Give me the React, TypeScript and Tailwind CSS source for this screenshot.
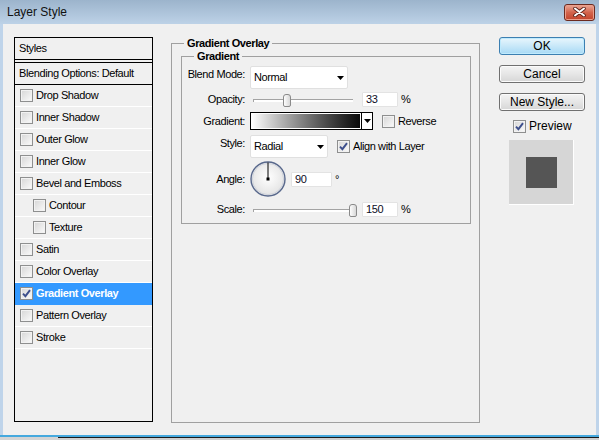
import clsx from "clsx";

const styleItems = [
  { label: "Drop Shadow" },
  { label: "Inner Shadow" },
  { label: "Outer Glow" },
  { label: "Inner Glow" },
  { label: "Bevel and Emboss" },
  { label: "Contour", sub: true },
  { label: "Texture", sub: true },
  { label: "Satin" },
  { label: "Color Overlay" },
  { label: "Gradient Overlay", on: true },
  { label: "Pattern Overlay" },
  { label: "Stroke" },
];

function Check({ on = false, className }: { on?: boolean; className?: string }) {
  return (
    <span
      className={clsx(
        "flex h-[13px] w-[13px] shrink-0 items-center justify-center border border-[#8e8f8f] bg-linear-to-br from-[#d6d6d6] to-[#fbfbfb] shadow-[inset_0_0_0_1px_#f2f2f2]",
        className
      )}
    >
      {on && (
        <svg width="9" height="9" viewBox="0 0 9 9">
          <path d="M1 4.6 L3.4 7.2 L8 1.2" fill="none" stroke="#3d4f8c" strokeWidth="1.9" />
        </svg>
      )}
    </span>
  );
}

function Arrow() {
  return (
    <svg width="7" height="4" viewBox="0 0 7 4">
      <path d="M0 0 H7 L3.5 4 Z" fill="#000" />
    </svg>
  );
}

function Select({ value, width }: { value: string; width: string }) {
  return (
    <div
      className={clsx(
        "ml-[5px] flex h-[23px] items-center justify-between rounded-[2px] border border-[#e0e0e0] bg-white pl-[3px] pr-[3px]",
        width
      )}
    >
      <span>{value}</span>
      <Arrow />
    </div>
  );
}

function Field({ value, width, className }: { value: string; width: string; className?: string }) {
  return (
    <div
      className={clsx(
        "flex h-[15px] items-center rounded-[1px] border border-[#e3e3e3] bg-white pl-[3px] text-[#0c0c1e]",
        width,
        className
      )}
    >
      {value}
    </div>
  );
}

function Slider({ thumb }: { thumb: string }) {
  return (
    <div className="relative ml-[8px] h-[15px] w-[100px]">
      <div className="absolute left-0 right-0 top-[7px] h-[3px] border-l border-t border-[#a3a3a3] bg-white" />
      <div
        className={clsx(
          "absolute top-[2px] h-[13px] w-[8px] rounded-t-[3px] rounded-b-[2px] border border-[#8a8a8a] bg-linear-to-r from-[#fdfdfd] to-[#d8d8d8]",
          thumb
        )}
      />
    </div>
  );
}

function Dial() {
  return (
    <svg width="36" height="36" viewBox="0 0 36 36" className="ml-[5px]">
      <defs>
        <radialGradient id="dialFill" cx="50%" cy="45%" r="55%">
          <stop offset="0%" stopColor="#ffffff" />
          <stop offset="100%" stopColor="#e2e2e2" />
        </radialGradient>
      </defs>
      <circle cx="18" cy="18" r="17" fill="url(#dialFill)" stroke="#58688c" strokeWidth="1.4" />
      <circle cx="18" cy="18" r="15.6" fill="none" stroke="#c9ced8" strokeWidth="0.8" />
      <line x1="18" y1="18" x2="18" y2="1.5" stroke="#000" strokeWidth="1" />
      <rect x="16.5" y="16.5" width="3" height="3" fill="#000" />
    </svg>
  );
}

function Btn({ label, primary = false, className }: { label: string; primary?: boolean; className?: string }) {
  return (
    <button
      className={clsx(
        "flex h-[18px] w-[86px] items-center justify-center rounded-[3px] border text-[12px] leading-none tracking-normal text-black",
        primary
          ? "border-[#3c7fb1] bg-linear-to-b from-[#e8f6fd] via-[#c8e8f9] to-[#a7d9f5] shadow-[inset_0_0_0_1px_#bfeafd]"
          : "border-[#707070] bg-linear-to-b from-[#f4f4f4] via-[#e6e6e6] to-[#d6d6d6] shadow-[inset_0_0_0_1px_#fbfbfb]",
        className
      )}
    >
      {label}
    </button>
  );
}

export default function App() {
  return (
    <div className="flex h-[440px] w-[599px] flex-col overflow-hidden bg-[#f0f0f0] font-['Liberation_Sans',Arial,sans-serif] text-[11px] leading-[13px] tracking-[-0.4px] text-black">
      {/* title bar */}
      <div className="flex h-[24px] shrink-0 items-center justify-between bg-linear-to-b from-[#9cb4cc] to-[#bdd2e7] pl-[7px] pr-[4px]">
        <span className="text-[12px] tracking-normal text-[#111]">Layer Style</span>
        <div className="flex h-[17px] w-[31px] items-center justify-center rounded-[3px] border border-[#6b2a1f] bg-linear-to-b from-[#e9a796] via-[#d3644c] to-[#c2422a] shadow-[inset_0_0_0_1px_#eba08c]">
          <svg width="13" height="10" viewBox="0 0 13 10">
            <path d="M2 1.5 L11 8.5 M11 1.5 L2 8.5" stroke="#5a2118" strokeWidth="3.6" strokeLinecap="round" />
            <path d="M2 1.5 L11 8.5 M11 1.5 L2 8.5" stroke="#fff" strokeWidth="2" strokeLinecap="round" />
          </svg>
        </div>
      </div>

      <div className="flex flex-1 border-x-[3px] border-[#bfd4ea]">
        {/* styles list */}
        <div className="ml-[11px] mt-[13px] flex h-[385px] w-[139px] flex-col border border-black">
          <div className="flex h-[22px] items-center border-b border-black pl-[4px]">Styles</div>
          <div className="h-[3px] border-b border-black" />
          <div className="flex h-[22px] items-center border-b border-black pl-[4px]">Blending Options: Default</div>
          {styleItems.map((it) => (
            <div
              key={it.label}
              className={clsx(
                "flex h-[22px] items-center gap-[3px] border-b",
                it.on ? "border-[#3399ff] bg-[#3399ff] font-bold text-white" : "border-white",
                it.sub ? "pl-[18px]" : "pl-[5px]"
              )}
            >
              <Check on={it.on} />
              <span>{it.label}</span>
            </div>
          ))}
        </div>

        {/* settings */}
        <fieldset className="ml-[18px] mt-[13px] h-[386px] w-[309px] border border-[#a0a0a0]">
          <legend className="ml-[12px] px-[3px] font-bold">Gradient Overlay</legend>
          <fieldset className="ml-[9px] w-[290px] border border-[#a0a0a0] pb-[6px]">
            <legend className="ml-[12px] px-[3px] font-bold">Gradient</legend>

            <div className="mt-[3px] flex h-[23px] items-center">
              <span className="mb-[7px] w-[63px] text-right">Blend Mode:</span>
              <Select value="Normal" width="w-[98px]" />
            </div>

            <div className="mt-[3px] flex h-[15px] items-center">
              <span className="w-[63px] text-right">Opacity:</span>
              <Slider thumb="left-[30px]" />
              <Field value="33" width="w-[36px]" className="ml-[9px]" />
              <span className="ml-[3px]">%</span>
            </div>

            <div className="mt-[5px] flex h-[18px] items-center">
              <span className="w-[63px] text-right">Gradient:</span>
              <div className="ml-[5px] flex h-[18px]">
                <div className="w-[112px] border border-black bg-white p-px">
                  <div className="h-full bg-linear-to-r from-white to-[#0a0a0a]" />
                </div>
                <div className="flex w-[11px] items-center justify-center border border-l-0 border-black bg-white">
                  <Arrow />
                </div>
              </div>
              <Check className="ml-[9px]" />
              <span className="ml-[3px]">Reverse</span>
            </div>

            <div className="mt-[5px] flex h-[23px] items-center">
              <span className="mb-[7px] w-[63px] text-right">Style:</span>
              <Select value="Radial" width="w-[78px]" />
              <Check on className="ml-[9px]" />
              <span className="ml-[3px]">Align with Layer</span>
            </div>

            <div className="mt-[3px] flex h-[36px] items-center">
              <span className="w-[63px] text-right">Angle:</span>
              <Dial />
              <Field value="90" width="w-[41px]" className="ml-[5px]" />
              <span className="ml-[3px]">°</span>
            </div>

            <div className="mt-[5px] flex h-[15px] items-center">
              <span className="w-[63px] text-right">Scale:</span>
              <Slider thumb="left-[96px]" />
              <Field value="150" width="w-[36px]" className="ml-[9px]" />
              <span className="ml-[3px]">%</span>
            </div>
          </fieldset>
        </fieldset>

        {/* buttons + preview */}
        <div className="ml-[19px] mt-[13px] flex w-[86px] flex-col">
          <Btn label="OK" primary />
          <Btn label="Cancel" className="mt-[10px]" />
          <Btn label="New Style..." className="mt-[10px]" />
          <div className="mt-[8px] flex h-[14px] items-center pl-[14px] text-[12px] tracking-normal">
            <Check on />
            <span className="ml-[3px]">Preview</span>
          </div>
          <div className="ml-[10px] mt-[7px] flex h-[65px] w-[65px] items-center justify-center border-b border-r border-white bg-[#d6d6d6]">
            <div className="h-[31px] w-[31px] bg-[#555555]" />
          </div>
        </div>
      </div>

      <div className="h-[2px] shrink-0 bg-[#45a9de]" />
      <div className="flex h-[3px] shrink-0">
        <div className="w-[58px] bg-[#d4d4d4]" />
        <div className="flex-1 border-t border-[#1a1a1a] bg-[#cfcfcf]" />
      </div>
    </div>
  );
}
